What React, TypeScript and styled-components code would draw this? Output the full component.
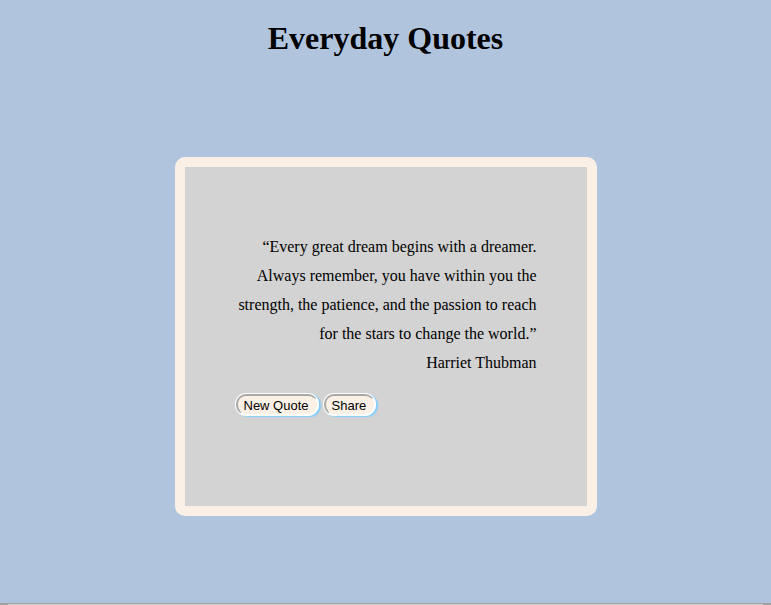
import React from "react";
import styled, { createGlobalStyle } from "styled-components";

const GlobalStyle = createGlobalStyle`
  body {
    margin: 0;
    background: lightsteelblue;
    font-family: "Liberation Serif", "Times New Roman", serif;
    font-size: 16px;
    color: #000;
  }
`;

const Page = styled.div`
  display: flex;
  flex-direction: column;
  min-height: 100vh;
`;

const Content = styled.div`
  flex: 1;
  padding: 20px 8px;
`;

const Title = styled.h1`
  margin: 0;
  font-size: 32px;
  line-height: 37px;
  text-align: center;
`;

const QuoteCard = styled.main`
  box-sizing: border-box;
  width: 100%;
  max-width: 422px;
  margin: 100px auto 0;
  padding: 65px 50px 91px;
  border: 10px solid linen;
  border-radius: 10px;
  background: lightgray;
`;

const Quote = styled.blockquote`
  margin: 0;
  text-align: right;
  line-height: 29px;
`;

const Text = styled.p`
  margin: 0;
`;

const Author = styled.footer`
  margin: 0;
`;

const Actions = styled.div`
  display: flex;
  gap: 6px;
  margin-top: 17px;
  padding: 0 1px;
`;

const ActionButton = styled.button`
  box-sizing: border-box;
  height: 21px;
  padding: 0 8px 0 6px;
  border: 2px solid;
  border-color: #a9a9a9 #fff #fff #a9a9a9;
  border-width: 2px 1px 1px 2px;
  border-radius: 10px;
  background: linen;
  box-shadow: 0 0 0 1px #fff, 2px 1px 1px 1px #87cefa;
  font-family: "Liberation Sans", Arial, sans-serif;
  font-size: 13px;
  line-height: 17px;
  color: #000;
`;

const BottomEdge = styled.div`
  display: flex;
  justify-content: space-between;
  height: 1px;
  border-top: 1px solid #a0a0a0;
  background: #d4d0d0;
`;

const EdgeCorner = styled.span`
  width: 8px;
  background: #a0a0a0;
`;

export default function App() {
  return (
    <>
      <GlobalStyle />
      <Page>
        <Content>
          <Title>Everyday Quotes</Title>
          <QuoteCard>
            <Quote>
              <Text>
                “Every great dream begins with a dreamer. Always remember, you
                have within you the strength, the patience, and the passion to
                reach for the stars to change the world.”
              </Text>
              <Author>Harriet Thubman</Author>
            </Quote>
            <Actions>
              <ActionButton type="button">New Quote</ActionButton>
              <ActionButton type="button">Share</ActionButton>
            </Actions>
          </QuoteCard>
        </Content>
        <BottomEdge>
          <EdgeCorner />
          <EdgeCorner />
        </BottomEdge>
      </Page>
    </>
  );
}
